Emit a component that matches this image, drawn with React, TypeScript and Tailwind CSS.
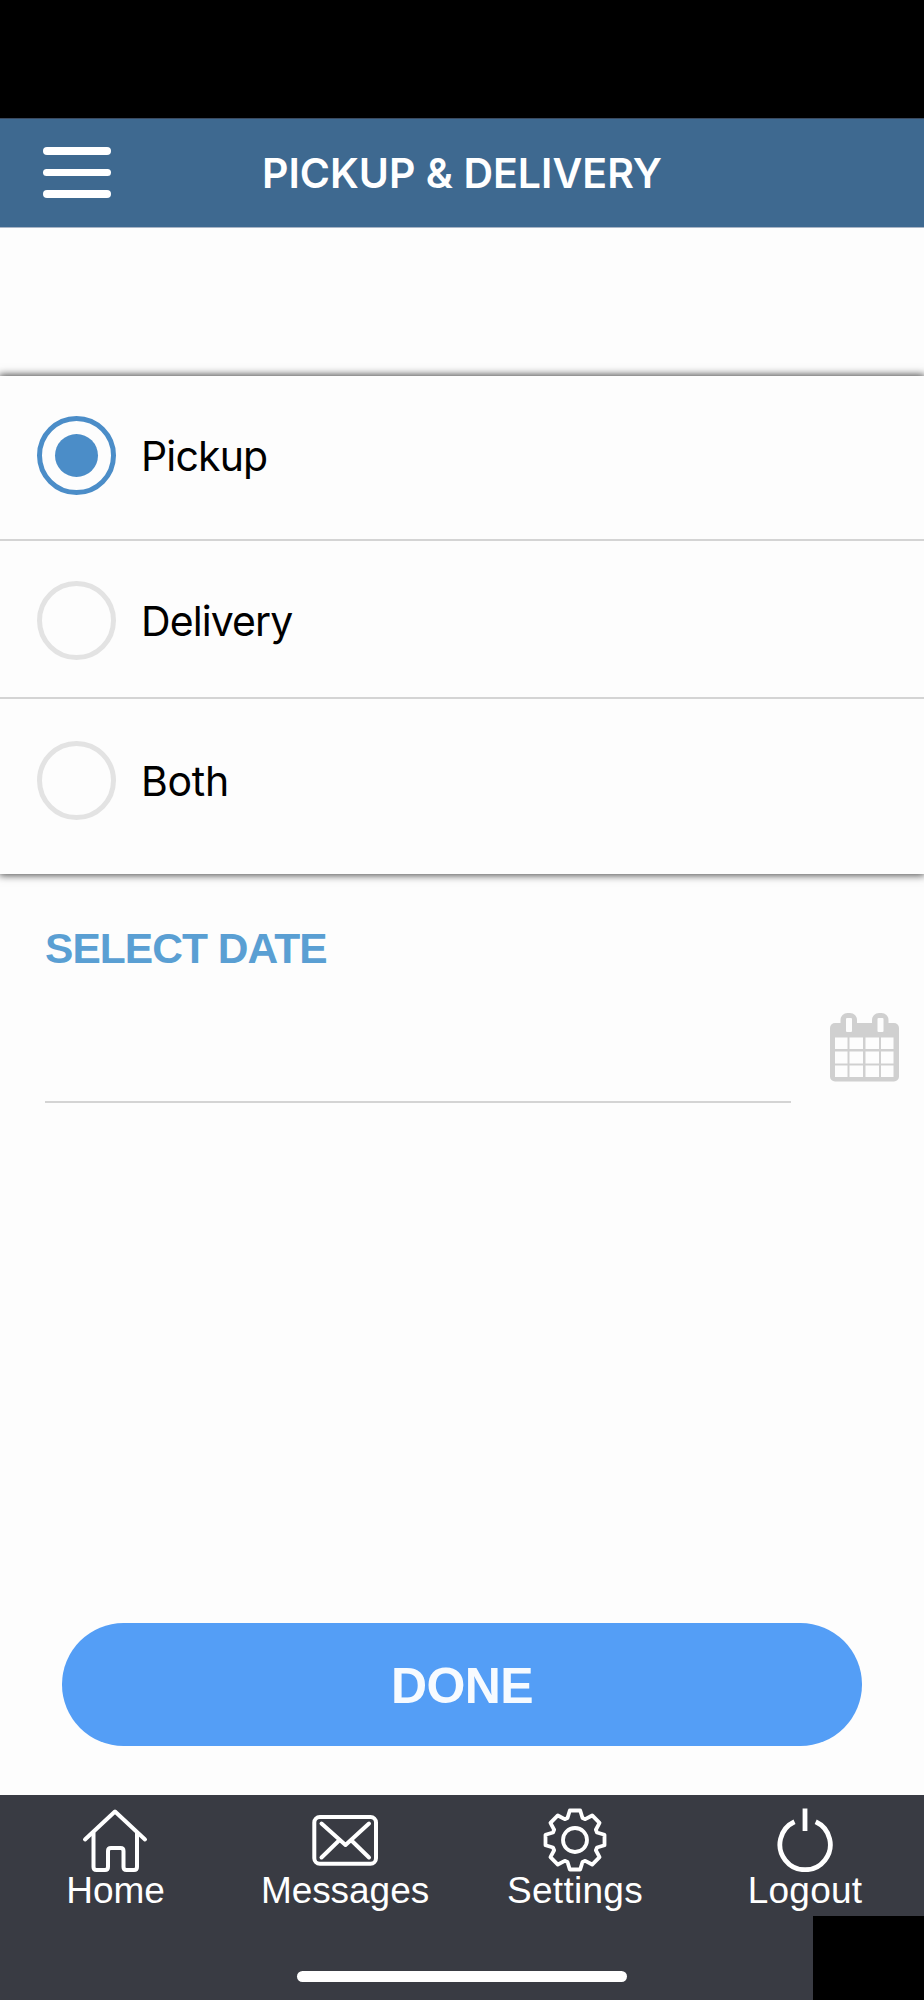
import React, { useState } from 'react';

const options = [
  { id: 'pickup', label: 'Pickup', row: 'h-[165px] pt-[40px] border-b-2', text: 'tracking-[-0.85px]' },
  { id: 'delivery', label: 'Delivery', row: 'h-[158px] pt-[40px] border-b-2', text: 'tracking-[-0.9px]' },
  { id: 'both', label: 'Both', row: 'h-[175px] pt-[42px]', text: 'tracking-[-0.3px]' },
];

function HomeIcon() {
  return (
    <svg width="66" height="64" viewBox="0 0 66 64" fill="none" stroke="#fff" strokeWidth="4" strokeLinecap="round" strokeLinejoin="round">
      <path d="M3 31.500 33 3.500l30 28" />
      <path d="M11.500 25v34q0 3 3 3h8.500q3 0 3-3V43q0-3 3-3h9.500q3 0 3 3v16q0 3 3 3H52q3 0 3-3V25" />
    </svg>
  );
}

function MailIcon() {
  return (
    <svg width="66" height="64" viewBox="0 0 66 64" fill="none" stroke="#fff" strokeWidth="4" strokeLinecap="round" strokeLinejoin="round">
      <rect x="2.300" y="9" width="61.700" height="46.700" rx="5.500" />
      <path d="M9.500 15.500 33.500 37 57 15.500M9.500 49.500 27 32.500M57 49.500 39.500 32.500" />
    </svg>
  );
}

function GearIcon() {
  // one tooth, turned eight times around the hub
  const tooth = [[-7.5, -22], [-5.2, -29.5], [5.2, -29.5], [7.5, -22]];
  const points = Array.from({ length: 8 }, (_, i) => {
    const a = (i * Math.PI) / 4;
    return tooth
      .map(([x, y]) => `${(x * Math.cos(a) - y * Math.sin(a)).toFixed(2)},${(x * Math.sin(a) + y * Math.cos(a)).toFixed(2)}`)
      .join(' ');
  }).join(' ');

  return (
    <svg width="66" height="64" viewBox="-33 -32 66 64" fill="none" stroke="#fff" strokeWidth="3.800" strokeLinejoin="round">
      <polygon points={points} />
      <circle r="12" />
    </svg>
  );
}

function PowerIcon() {
  return (
    <svg width="66" height="64" viewBox="0 0 66 64" fill="none" stroke="#fff" strokeWidth="4.800">
      <path d="M22.500 13.700A25.200 25.200 0 1 0 43.700 13.700" />
      <path d="M33 .5v22.500" />
    </svg>
  );
}

function CalendarIcon() {
  return (
    <svg width="69" height="69" viewBox="0 0 69 69">
      <rect y="10" width="69" height="58.500" rx="5" fill="#d0d0d0" />
      <rect x="10.500" width="16.500" height="22" rx="7" fill="#d0d0d0" />
      <rect x="42" width="16.500" height="22" rx="7" fill="#d0d0d0" />
      <rect x="16" y="5" width="6" height="14" rx="1" fill="#fdfdfd" />
      <rect x="47.500" y="5" width="6" height="14" rx="1" fill="#fdfdfd" />
      {[24.5, 38.5, 52.5].map(y =>
        [5, 19.5, 35.5, 51].map((x, i) => (
          <rect key={`${x}-${y}`} x={x} y={y} width={i === 1 || i === 2 ? 13.5 : 12.5} height={y === 38.5 ? 12 : 11.5} fill="#fdfdfd" />
        ))
      )}
    </svg>
  );
}

const tabs = [
  { label: 'Home', icon: <HomeIcon />, text: 'tracking-[-0.1px] pl-px' },
  { label: 'Messages', icon: <MailIcon />, text: 'tracking-[-0.05px]' },
  { label: 'Settings', icon: <GearIcon />, text: 'tracking-[0.3px]' },
  { label: 'Logout', icon: <PowerIcon />, text: 'tracking-[0.2px]' },
];

export default function App() {
  const [selected, setSelected] = useState('pickup');

  return (
    <div className="w-[924px] h-[2000px] flex flex-col overflow-hidden bg-[#fdfdfd] font-['Liberation_Sans',sans-serif]">
      <div className="h-[118px] shrink-0 bg-black" />
      <header className="relative h-[110px] shrink-0 flex items-center justify-center bg-[#3e6990] border-t border-t-[#3a4a60] border-b border-b-[#a9b5c6]">
        <button aria-label="Menu" className="absolute left-[43px] top-[28px] flex flex-col gap-[14px]">
          <span className="w-[67.5px] h-[7.7px] rounded-full bg-white" />
          <span className="w-[67.5px] h-[7.7px] rounded-full bg-white" />
          <span className="w-[67.5px] h-[7.7px] rounded-full bg-white" />
        </button>
        <h1 className="font-['Inter',sans-serif] font-semibold text-[41px] leading-none text-white whitespace-nowrap tracking-[0.02px]">PICKUP &amp; DELIVERY</h1>
      </header>

      <div className="mt-[148px] h-[498px] shrink-0 bg-[#fdfdfd] shadow-[0_0_8px_1px_rgba(0,0,0,0.75)]">
        {options.map(option => (
          <button
            key={option.id}
            onClick={() => setSelected(option.id)}
            className={`w-full pl-[37px] flex items-start gap-[25px] border-[#d4d4d4] ${option.row}`}
          >
            <span className={`w-[79px] h-[79px] shrink-0 rounded-full border-[5px] flex items-center justify-center ${selected === option.id ? 'border-[#4b8dc8]' : 'border-[#e3e3e3]'}`}>
              {selected === option.id && <span className="w-[43px] h-[43px] rounded-full bg-[#4b8dc8]" />}
            </span>
            <span className={`h-[81px] flex items-center font-['Inter',sans-serif] text-[41px] leading-none text-black ${option.text}`}>{option.label}</span>
          </button>
        ))}
      </div>

      <section className="pl-[45px] pr-[25px] pt-[54px] shrink-0">
        <h2 className="font-bold text-[42.5px] leading-[42px] tracking-[-0.95px] text-[#5a9fd3]">SELECT DATE</h2>
        <div className="flex justify-between items-start">
          <div className="mt-[40px] w-[746px] h-[93px] border-b-2 border-[#d4d4d4]" />
          <div className="mt-[42.5px]">
            <CalendarIcon />
          </div>
        </div>
      </section>

      <button className="mt-auto mb-[49px] mx-[62px] pt-[3px] h-[123px] shrink-0 rounded-full bg-[#549ef6] font-bold text-[50px] leading-none tracking-[-0.6px] text-[#f7fbff]">
        DONE
      </button>

      <nav className="relative h-[205px] shrink-0 grid grid-cols-4 items-start pt-[13px] pr-[4px] bg-[#393b43]">
        {tabs.map(tab => (
          <button key={tab.label} className="flex flex-col items-center">
            {tab.icon}
            <span className={`text-[37px] leading-[38px] text-white ${tab.text}`}>{tab.label}</span>
          </button>
        ))}
        <span className="absolute left-[297px] top-[176px] w-[330px] h-[11px] rounded-full bg-white" />
        <span className="absolute right-0 bottom-0 w-[111px] h-[84px] bg-black" />
      </nav>
    </div>
  );
}
